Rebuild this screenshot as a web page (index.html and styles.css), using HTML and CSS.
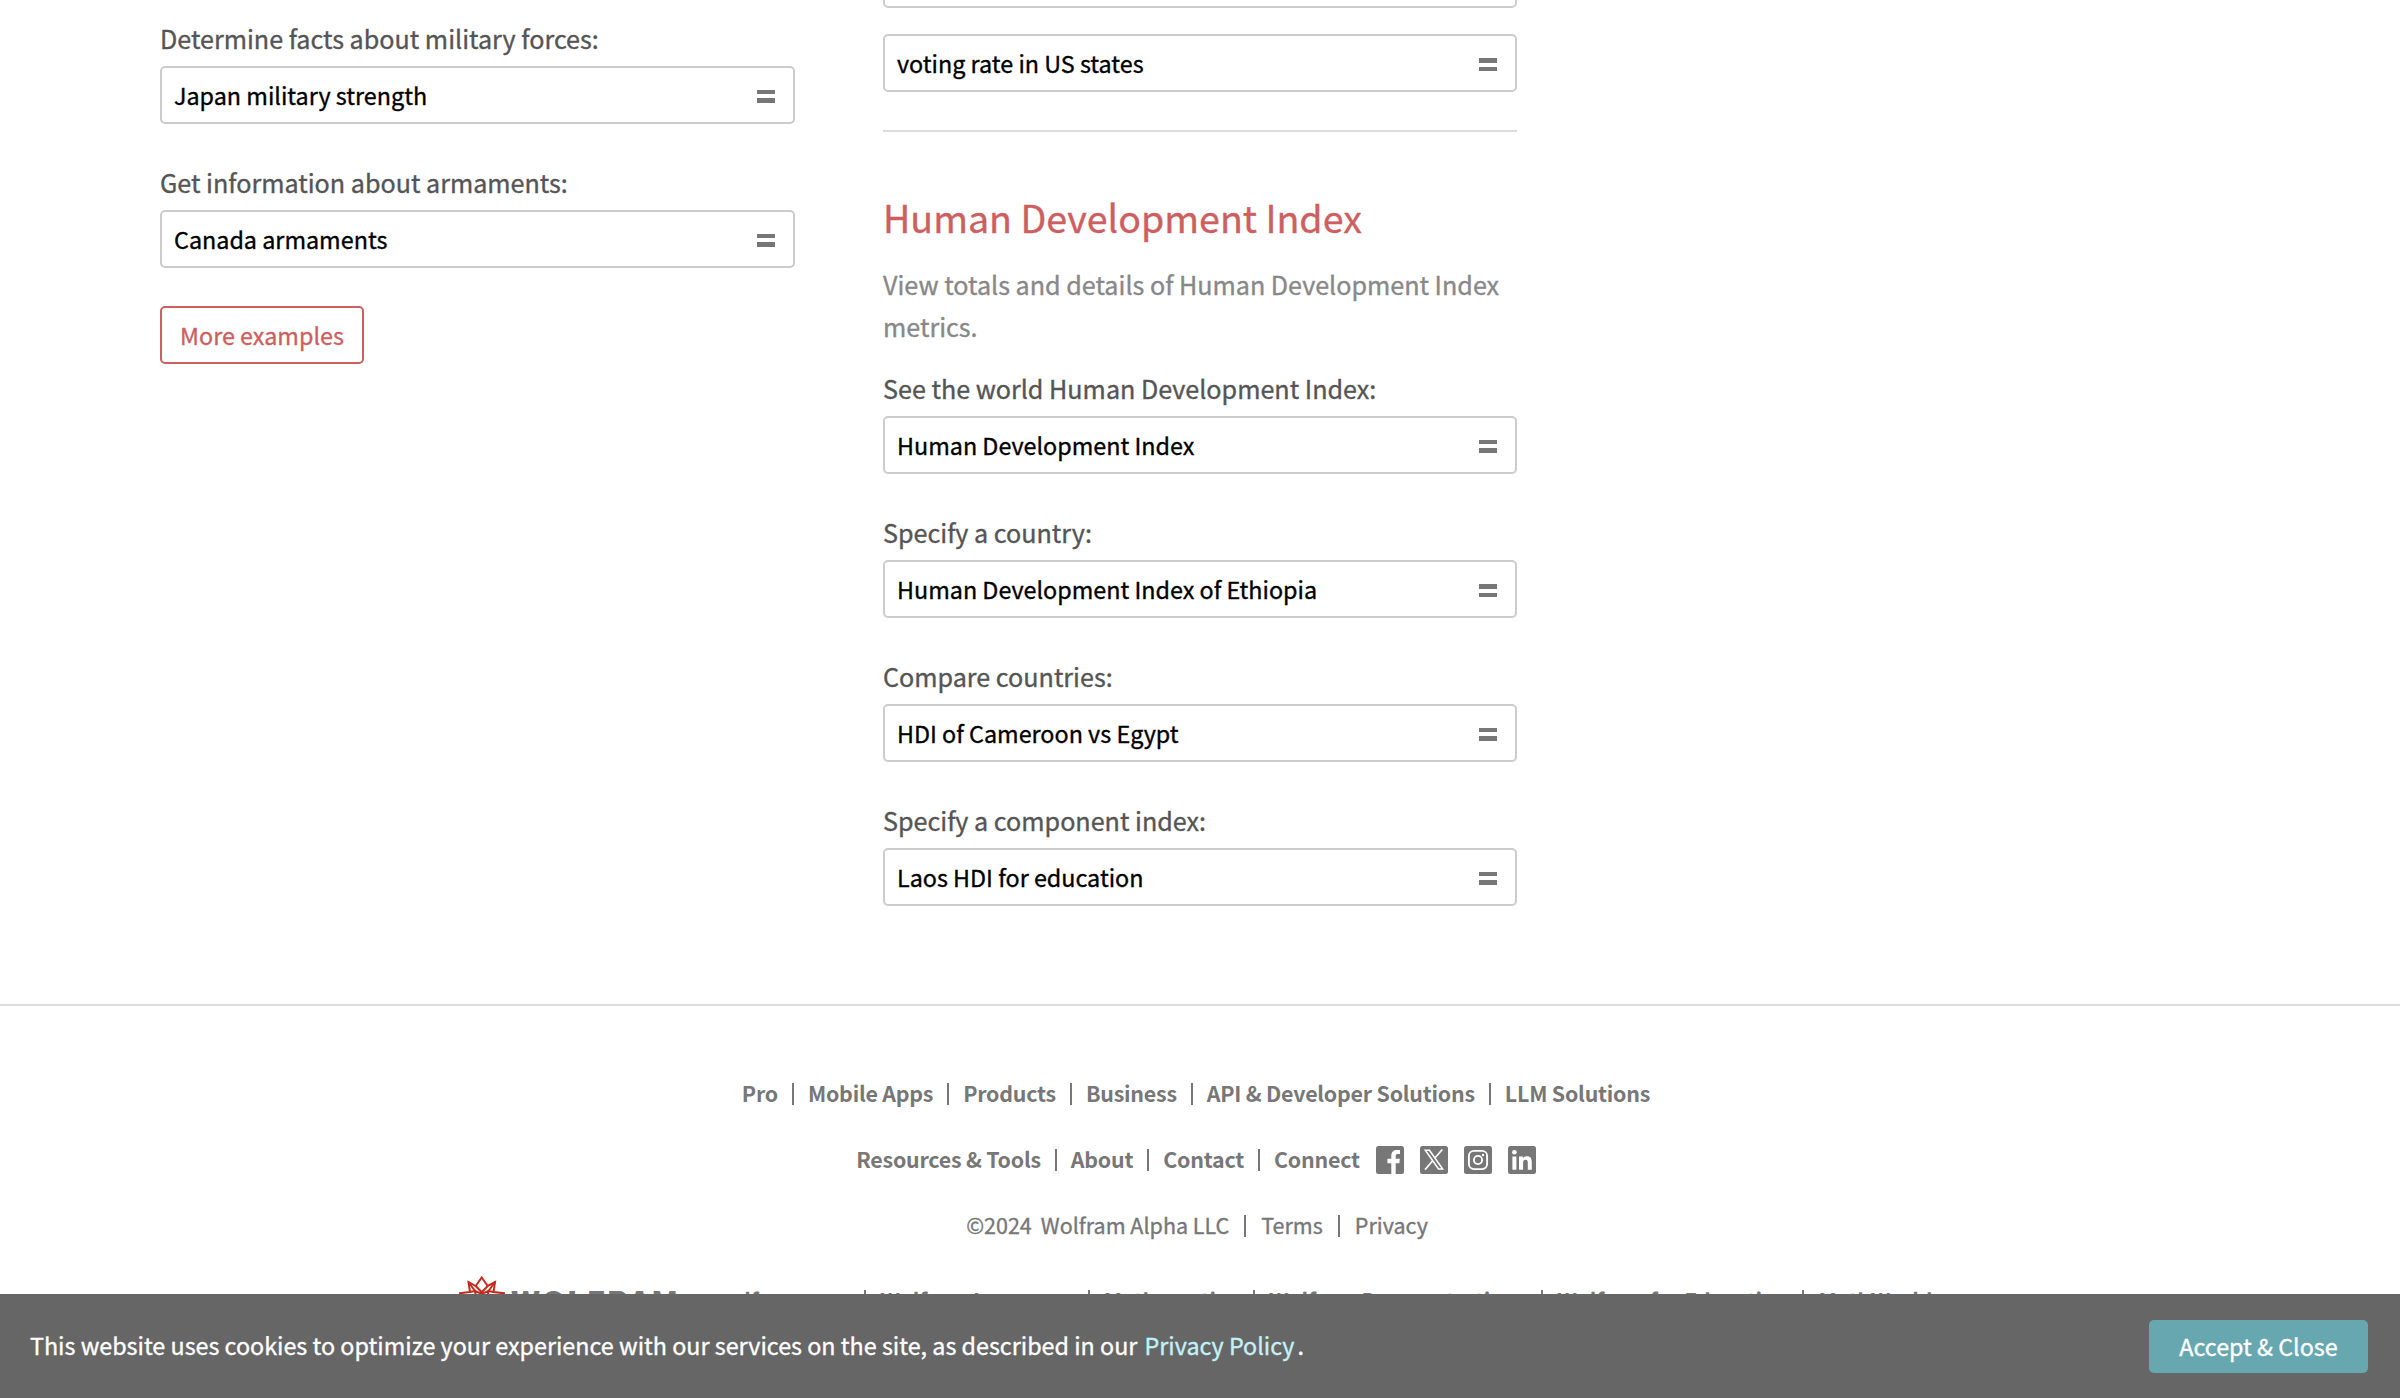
FILE: index.html
```html
<!DOCTYPE html>
<html lang="en">
<head>
<meta charset="utf-8">
<title>Wolfram|Alpha Examples: Government</title>
<link rel="stylesheet" href="styles.css">
</head>
<body>
<main class="columns">
  <section class="column">
    <div class="group first">
      <p class="label">Determine facts about military forces:</p>
      <a class="query">Japan military strength<i class="eq"></i></a>
    </div>
    <div class="group">
      <p class="label">Get information about armaments:</p>
      <a class="query">Canada armaments<i class="eq"></i></a>
    </div>
    <a class="more">More examples</a>
  </section>
  <section class="column">
    <a class="query cut"></a>
    <a class="query voting">voting rate in US states<i class="eq"></i></a>
    <hr class="rule">
    <h2 class="title">Human Development Index</h2>
    <p class="desc">View totals and details of Human Development Index metrics.</p>
    <div class="group first">
      <p class="label">See the world Human Development Index:</p>
      <a class="query">Human Development Index<i class="eq"></i></a>
    </div>
    <div class="group">
      <p class="label">Specify a country:</p>
      <a class="query">Human Development Index of Ethiopia<i class="eq"></i></a>
    </div>
    <div class="group">
      <p class="label">Compare countries:</p>
      <a class="query">HDI of Cameroon vs Egypt<i class="eq"></i></a>
    </div>
    <div class="group">
      <p class="label">Specify a component index:</p>
      <a class="query">Laos HDI for education<i class="eq"></i></a>
    </div>
  </section>
</main>
<footer class="footer">
  <nav class="row strong">
    <a>Pro</a><i class="sep"></i><a>Mobile Apps</a><i class="sep"></i><a>Products</a><i class="sep"></i><a>Business</a><i class="sep"></i><a>API &amp; Developer Solutions</a><i class="sep"></i><a>LLM Solutions</a>
  </nav>
  <nav class="row strong">
    <a>Resources &amp; Tools</a><i class="sep"></i><a>About</a><i class="sep"></i><a>Contact</a><i class="sep"></i><a>Connect</a>
    <span class="social">
      <svg viewBox="0 0 28 28"><rect width="28" height="28" rx="2.5" fill="#777"/><path d="M15.300 28V17.200h-3.900v-4.400h3.900V9.600c0-3.700 2.200-5.700 5.600-5.700 1.300 0 2.400.1 3.100.2v3.800h-2.100c-1.700 0-2.200.9-2.200 2.200v2.700h4.200l-.6 4.400h-3.600V28z" fill="#fff"/></svg>
      <svg viewBox="0 0 28 28"><rect width="28" height="28" rx="2.5" fill="#777"/><path d="M5.300 4.200h4.200l13.200 18.800h-4.200z" fill="none" stroke="#fff" stroke-width="1.5"/><path d="M22.300 3.500l-7.600 8.800M12.700 14.700L5 23.600" stroke="#fff" stroke-width="1.7"/></svg>
      <svg viewBox="0 0 28 28"><rect width="28" height="28" rx="2.5" fill="#777"/><rect x="4.900" y="4.900" width="18.200" height="18.200" rx="5" fill="none" stroke="#fff" stroke-width="1.9"/><circle cx="14" cy="14" r="4.100" fill="none" stroke="#fff" stroke-width="1.9"/><circle cx="19" cy="9" r="1.2" fill="#fff"/></svg>
      <svg viewBox="0 0 28 28"><rect width="28" height="28" rx="2.5" fill="#777"/><circle cx="6.400" cy="6.300" r="2.3" fill="#fff"/><path d="M4.400 10.500h4v13.200h-4zM11 10.500h3.900v1.800c.8-1.300 2.100-2.100 4-2.100 4.100 0 4.900 2.700 4.900 6.200v7.300h-4v-6.500c0-1.600 0-3.500-2.200-3.500s-2.500 1.700-2.500 3.400v6.600H11z" fill="#fff"/></svg>
    </span>
  </nav>
  <div class="row legal">
    <span class="year">©2024</span><a>Wolfram Alpha LLC</a><i class="sep"></i><a>Terms</a><i class="sep"></i><a>Privacy</a>
  </div>
  <div class="row strong brand">
    <svg class="spikey" viewBox="0 0 46 50" fill="none" stroke="#c52b1b" stroke-width="2"><path d="M22.700 1.500L28.700 10 36 6l-1.500 10L45 17.200 38 25l5 8-9 2-2 9-9.300-4L13 44l-2-9-9-2 6-8-7-7.800L11 16 9.500 6l7.200 4z"/><path d="M16.700 10l6 6.300 6-6.300M9.500 6l6.500 9 6.700 2.800L29.500 15 36 6M11 16l5-1 1 6M34.500 16l-5-1-1 6"/></svg>
    <span class="wordmark">WOLFRAM</span>
    <a>wolfram.com</a><i class="sep"></i><a>Wolfram Language</a><i class="sep"></i><a>Mathematica</a><i class="sep"></i><a>Wolfram Demonstrations</a><i class="sep"></i><a>Wolfram for Education</a><i class="sep"></i><a>MathWorld</a>
  </div>
</footer>
<aside class="cookies">
  <p class="notice">This website uses cookies to optimize your experience with our services on the site, as described in our <a class="policy">Privacy Policy</a>.</p>
  <button class="accept">Accept &amp; Close</button>
</aside>
</body>
</html>
```
FILE: styles.css
```css
* { box-sizing: border-box; }
html, body { height: 1398px; overflow: hidden; }
body {
  margin: 0;
  background: #fff;
  color: #555;
  font-family: "Noto Sans CJK SC", "Source Sans Pro", sans-serif;
  font-size: 25.13px;
  -webkit-text-stroke: 0.35px currentColor;
}
p, h2 { margin: 0; font-weight: 400; }

.columns {
  display: grid;
  grid-template-columns: 635px 634px;
  column-gap: 88px;
  height: 1004px;
  padding-left: 160px;
}
.column { display: flow-root; }
.group { margin-top: 40px; }
.group.first { margin-top: 20px; }
.label { line-height: 36px; margin-bottom: 10px; white-space: nowrap; }
.query {
  display: flex;
  justify-content: space-between;
  align-items: center;
  height: 58px;
  padding: 0 18px 0 12px;
  border: 2px solid #ccc;
  border-radius: 5px;
  color: #000;
  font-size: 23.33px;
  line-height: 54px;
}
.query.cut { margin-top: -50px; }
.query.voting { margin-top: 26px; }
.eq {
  width: 18px;
  height: 13px;
  margin-top: 2px;
  background: linear-gradient(#777 4.5px, transparent 4.5px 8.5px, #777 8.5px);
}
.more {
  display: block;
  width: 204px;
  height: 58px;
  margin-top: 38px;
  border: 2px solid #cd5f61;
  border-radius: 5px;
  color: #cd5f61;
  font-size: 23.33px;
  line-height: 54px;
  text-align: center;
}
.rule { height: 2px; margin: 38px 0 58px; border: 0; background: #ddd; }
.title { font-size: 37.6px; line-height: 54px; color: #cd5f61; }
.desc { margin-top: 19px; line-height: 42px; color: #888; }
.desc + .group.first { margin-top: 23px; }

.footer {
  height: 394px;
  padding-top: 55px;
  border-top: 2px solid #ddd;
  color: #777;
  font-size: 21.4px;
}
.row {
  display: flex;
  justify-content: center;
  align-items: center;
  gap: 14px;
  height: 66px;
  padding-right: 8px;
  white-space: nowrap;
}
.row a, .year { line-height: 30px; padding-bottom: 3px; }
.strong { font-weight: 700; letter-spacing: -0.22px; -webkit-text-stroke: 0; }
.sep { width: 2px; height: 22px; background: #777; }
.social { display: flex; gap: 16px; margin-left: 2px; }
.social svg { width: 28px; height: 28px; }
.legal { gap: 15px; padding-right: 6px; font-size: 21.5px; }
.year { margin-right: -6px; }
.brand {
  justify-content: flex-start;
  margin-top: 9px;
  padding-left: 459px;
}
.spikey { flex: none; width: 46px; height: 50px; margin-right: -8px; }
.wordmark {
  width: 168px;
  margin-right: 20px;
  font-size: 31px;
  font-weight: 900;
  line-height: 30px;
  letter-spacing: 1.2px;
}

.cookies {
  position: fixed;
  inset: auto 0 0 0;
  display: flex;
  justify-content: space-between;
  align-items: center;
  height: 104px;
  padding: 0 32px 0 30px;
  background: #666;
  color: #fff;
  font-size: 23.32px;
}
.notice { line-height: 34px; padding-bottom: 2px; }
.policy { padding: 0 3px 0 2px; color: #c3f1f8; }
.accept {
  width: 219px;
  height: 53px;
  padding: 0;
  border: 0;
  border-radius: 5px;
  background: #67a7b0;
  color: #fff;
  font: inherit;
  line-height: 52px;
}
```
